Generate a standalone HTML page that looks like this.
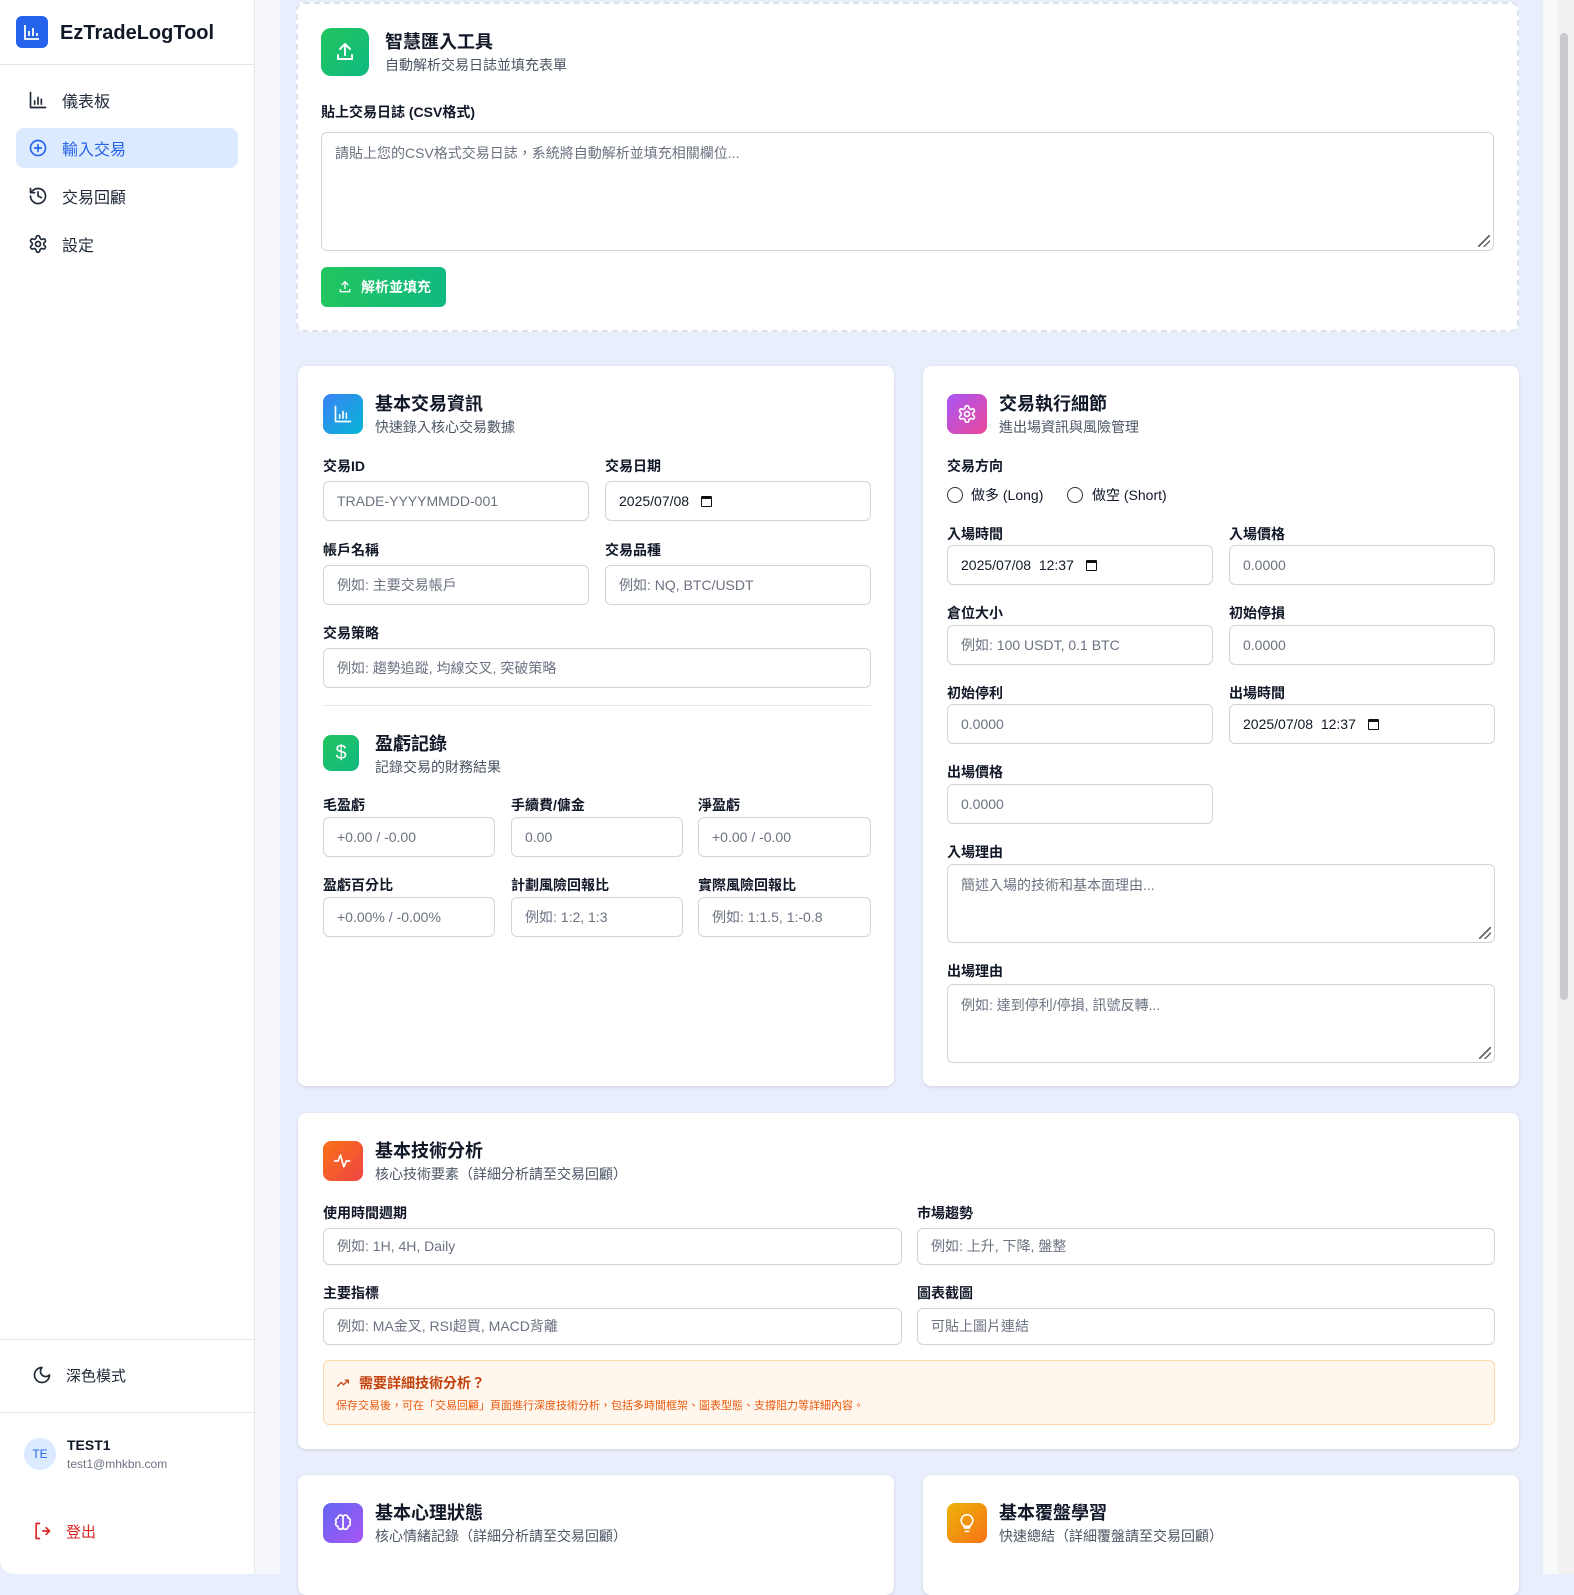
<!DOCTYPE html>
<html><head><meta charset="utf-8"><style>
*{box-sizing:border-box;margin:0;padding:0}
body{width:1574px;height:1574px;overflow:hidden;position:relative;font-family:"Liberation Sans","Noto Sans CJK TC",sans-serif;background:#e9eefc;color:#111827}
.a{position:absolute}
.sb{left:0;top:0;width:255px;height:1574px;background:#fff;border-right:1px solid #e5e7eb;border-bottom-left-radius:14px}
.hr{position:absolute;left:0;width:254px;height:1px;background:#e5e7eb}
.nav{position:absolute;left:16px;width:222px;height:40px;border-radius:8px;font-size:16px;color:#1f2937;display:flex;align-items:center;padding-left:12px;gap:14px}
.nav svg{width:20px;height:20px;fill:none;stroke:currentColor;stroke-width:2;stroke-linecap:round;stroke-linejoin:round}
.card{position:absolute;background:#fff;border-radius:8px;box-shadow:0 1px 3px rgba(0,0,0,.12)}
.ic{position:absolute;border-radius:8px;display:flex;align-items:center;justify-content:center}
.ic svg{fill:none;stroke:#fff;stroke-width:2;stroke-linecap:round;stroke-linejoin:round}
.t{position:absolute;font-size:18px;font-weight:700;color:#111827;line-height:22px}
.s{position:absolute;font-size:14px;color:#4b5563;line-height:18px}
.l{position:absolute;font-size:14px;font-weight:600;color:#111827;line-height:20px}
.in{position:absolute;height:40px;border:1px solid #d1d5db;border-radius:6px;background:#fff;font-size:14px;color:#6b7280;padding-left:13px;line-height:38px}
.dt{color:#111827}
.ta{position:absolute;border:1px solid #d1d5db;border-radius:6px;background:#fff;font-size:14px;color:#6b7280;padding:10px 13px}
.rz{position:absolute;right:3px;bottom:3px;width:12px;height:12px;background:linear-gradient(135deg,transparent 45%,#666 45%,#666 55%,transparent 55%,transparent 70%,#666 70%,#666 78%,transparent 78%)}
.cal{display:inline-block;width:11px;height:11px;border:1.5px solid #111;border-top-width:3px;border-radius:1px;vertical-align:-1px;margin-left:12px}
</style></head><body>
<div class="a" style="left:255px;top:0;width:25px;height:1574px;background:#f5f7fb"></div>
<div class="a" style="left:1543px;top:0;width:15px;height:1574px;background:#f8f9fb"></div>
<div class="a" style="left:1558px;top:0;width:16px;height:1574px;background:#f1f1f1"></div>
<div class="a" style="left:1560px;top:33px;width:8px;height:967px;background:#c9cbd1;border-radius:4px"></div>

<div class="a sb"></div>
<div class="a" style="left:16px;top:16px;width:32px;height:32px;border-radius:6px;background:#2563eb"><svg width="32" height="32" viewBox="0 0 32 32" fill="none" stroke="#fff" stroke-width="1.8"><path d="M9 9v14h14M13 20v-5M17 20v-8M21 20v-3"/></svg></div>
<div class="a" style="left:60px;top:20px;font-size:20px;font-weight:700;line-height:26px">EzTradeLogTool</div>
<div class="hr" style="top:64px"></div>
<div class="nav" style="top:80px"><svg viewBox="0 0 24 24"><path d="M3 3v18h18M8 17v-4M12 17V9M16 17v-6"/></svg>儀表板</div>
<div class="nav" style="top:128px;background:#dbeafe;color:#2563eb"><svg viewBox="0 0 24 24"><circle cx="12" cy="12" r="9"/><path d="M12 8v8M8 12h8"/></svg>輸入交易</div>
<div class="nav" style="top:176px"><svg viewBox="0 0 24 24"><path d="M3 12a9 9 0 1 0 3-6.7L3 8M3 3v5h5M12 7v5l4 2"/></svg>交易回顧</div>
<div class="nav" style="top:224px"><svg viewBox="0 0 24 24"><circle cx="12" cy="12" r="3"/><path d="M12.2 2h-.4a2 2 0 0 0-2 2v.2a2 2 0 0 1-1 1.7l-.4.3a2 2 0 0 1-2 0l-.2-.1a2 2 0 0 0-2.7.7l-.2.4a2 2 0 0 0 .7 2.7l.2.1a2 2 0 0 1 1 1.7v.5a2 2 0 0 1-1 1.7l-.2.1a2 2 0 0 0-.7 2.7l.2.4a2 2 0 0 0 2.7.7l.2-.1a2 2 0 0 1 2 0l.4.3a2 2 0 0 1 1 1.7v.2a2 2 0 0 0 2 2h.4a2 2 0 0 0 2-2v-.2a2 2 0 0 1 1-1.7l.4-.3a2 2 0 0 1 2 0l.2.1a2 2 0 0 0 2.7-.7l.2-.4a2 2 0 0 0-.7-2.7l-.2-.1a2 2 0 0 1-1-1.7v-.5a2 2 0 0 1 1-1.7l.2-.1a2 2 0 0 0 .7-2.7l-.2-.4a2 2 0 0 0-2.7-.7l-.2.1a2 2 0 0 1-2 0l-.4-.3a2 2 0 0 1-1-1.7V4a2 2 0 0 0-2-2z"/></svg>設定</div>
<div class="hr" style="top:1339px"></div>
<div class="nav" style="top:1355px;left:20px;font-size:15px"><svg viewBox="0 0 24 24"><path d="M12 3a6 6 0 0 0 9 9 9 9 0 1 1-9-9z"/></svg>深色模式</div>
<div class="hr" style="top:1412px"></div>
<div class="a" style="left:24px;top:1438px;width:32px;height:32px;border-radius:50%;background:#dbeafe;color:#2563eb;font-size:12px;text-align:center;line-height:32px">TE</div>
<div class="a" style="left:67px;top:1437px;font-size:14px;font-weight:700">TEST1</div>
<div class="a" style="left:67px;top:1457px;font-size:12px;color:#6b7280">test1@mhkbn.com</div>
<div class="nav" style="top:1511px;left:20px;font-size:15px;color:#dc2626"><svg viewBox="0 0 24 24"><path d="M9 3H5v18h4M13 12h8M17 8l4 4-4 4"/></svg>登出</div>

<!-- import card -->
<div class="card" style="left:296px;top:2px;width:1223px;height:330px;border:2px dashed #dde3ee;box-shadow:none"></div>
<div class="ic" style="left:321px;top:28px;width:48px;height:48px;border-radius:10px;background:linear-gradient(135deg,#22c55e,#10b981)"><svg width="24" height="24" viewBox="0 0 24 24"><path d="M12 15V4M7 9l5-5 5 5M5 15v4h14v-4"/></svg></div>
<div class="t" style="left:385px;top:31px">智慧匯入工具</div>
<div class="s" style="left:385px;top:56px">自動解析交易日誌並填充表單</div>
<div class="l" style="left:321px;top:102px">貼上交易日誌 (CSV格式)</div>
<div class="ta" style="left:321px;top:132px;width:1173px;height:119px">請貼上您的CSV格式交易日誌，系統將自動解析並填充相關欄位...<div class="rz"></div></div>
<div class="a" style="left:321px;top:267px;width:125px;height:40px;border-radius:6px;background:linear-gradient(90deg,#22c55e,#10b981);color:#fff;font-size:14px;font-weight:700;display:flex;align-items:center;padding-left:16px;gap:8px"><svg width="16" height="16" viewBox="0 0 24 24" fill="none" stroke="#fff" stroke-width="2"><path d="M12 15V4M7 9l5-5 5 5M5 15v4h14v-4"/></svg>解析並填充</div>

<!-- left card -->
<div class="card" style="left:298px;top:366px;width:596px;height:720px"></div>
<div class="ic" style="left:323px;top:394px;width:40px;height:40px;background:linear-gradient(135deg,#3b82f6,#06b6d4)"><svg width="20" height="20" viewBox="0 0 24 24"><path d="M3 3v18h18M8 17v-4M12 17V9M16 17v-6"/></svg></div>
<div class="t" style="left:375px;top:393px">基本交易資訊</div>
<div class="s" style="left:375px;top:418px">快速錄入核心交易數據</div>
<div class="l" style="left:323px;top:456px">交易ID</div>
<div class="in" style="left:323px;top:481px;width:266px">TRADE-YYYYMMDD-001</div>
<div class="l" style="left:605px;top:456px">交易日期</div>
<div class="in dt" style="left:605px;top:481px;width:266px">2025/07/08<span class="cal"></span></div>
<div class="l" style="left:323px;top:540px">帳戶名稱</div>
<div class="in" style="left:323px;top:565px;width:266px">例如: 主要交易帳戶</div>
<div class="l" style="left:605px;top:540px">交易品種</div>
<div class="in" style="left:605px;top:565px;width:266px">例如: NQ, BTC/USDT</div>
<div class="l" style="left:323px;top:623px">交易策略</div>
<div class="in" style="left:323px;top:648px;width:548px">例如: 趨勢追蹤, 均線交叉, 突破策略</div>
<div class="a" style="left:323px;top:705px;width:548px;height:1px;background:#e5e7eb"></div>
<div class="ic" style="left:323px;top:735px;width:36px;height:36px;background:linear-gradient(135deg,#22c55e,#10b981)"><span style="color:#fff;font-size:20px">$</span></div>
<div class="t" style="left:375px;top:733px">盈虧記錄</div>
<div class="s" style="left:375px;top:758px">記錄交易的財務結果</div>
<div class="l" style="left:323px;top:795px">毛盈虧</div>
<div class="in" style="left:323px;top:817px;width:172px">+0.00 / -0.00</div>
<div class="l" style="left:511px;top:795px">手續費/傭金</div>
<div class="in" style="left:511px;top:817px;width:172px">0.00</div>
<div class="l" style="left:698px;top:795px">淨盈虧</div>
<div class="in" style="left:698px;top:817px;width:173px">+0.00 / -0.00</div>
<div class="l" style="left:323px;top:875px">盈虧百分比</div>
<div class="in" style="left:323px;top:897px;width:172px">+0.00% / -0.00%</div>
<div class="l" style="left:511px;top:875px">計劃風險回報比</div>
<div class="in" style="left:511px;top:897px;width:172px">例如: 1:2, 1:3</div>
<div class="l" style="left:698px;top:875px">實際風險回報比</div>
<div class="in" style="left:698px;top:897px;width:173px">例如: 1:1.5, 1:-0.8</div>

<!-- right card -->
<div class="card" style="left:923px;top:366px;width:596px;height:720px"></div>
<div class="ic" style="left:947px;top:394px;width:40px;height:40px;background:linear-gradient(135deg,#a855f7,#ec4899)"><svg width="20" height="20" viewBox="0 0 24 24"><circle cx="12" cy="12" r="3"/><path d="M12.2 2h-.4a2 2 0 0 0-2 2v.2a2 2 0 0 1-1 1.7l-.4.3a2 2 0 0 1-2 0l-.2-.1a2 2 0 0 0-2.7.7l-.2.4a2 2 0 0 0 .7 2.7l.2.1a2 2 0 0 1 1 1.7v.5a2 2 0 0 1-1 1.7l-.2.1a2 2 0 0 0-.7 2.7l.2.4a2 2 0 0 0 2.7.7l.2-.1a2 2 0 0 1 2 0l.4.3a2 2 0 0 1 1 1.7v.2a2 2 0 0 0 2 2h.4a2 2 0 0 0 2-2v-.2a2 2 0 0 1 1-1.7l.4-.3a2 2 0 0 1 2 0l.2.1a2 2 0 0 0 2.7-.7l.2-.4a2 2 0 0 0-.7-2.7l-.2-.1a2 2 0 0 1-1-1.7v-.5a2 2 0 0 1 1-1.7l.2-.1a2 2 0 0 0 .7-2.7l-.2-.4a2 2 0 0 0-2.7-.7l-.2.1a2 2 0 0 1-2 0l-.4-.3a2 2 0 0 1-1-1.7V4a2 2 0 0 0-2-2z"/></svg></div>
<div class="t" style="left:999px;top:393px">交易執行細節</div>
<div class="s" style="left:999px;top:418px">進出場資訊與風險管理</div>
<div class="l" style="left:947px;top:456px">交易方向</div>
<div class="a" style="left:947px;top:487px;width:16px;height:16px;border:1.5px solid #333;border-radius:50%"></div>
<div class="a" style="left:971px;top:485px;font-size:14px">做多 (Long)</div>
<div class="a" style="left:1067px;top:487px;width:16px;height:16px;border:1.5px solid #333;border-radius:50%"></div>
<div class="a" style="left:1092px;top:485px;font-size:14px">做空 (Short)</div>
<div class="l" style="left:947px;top:524px">入場時間</div>
<div class="in dt" style="left:947px;top:545px;width:266px">2025/07/08&nbsp; 12:37<span class="cal"></span></div>
<div class="l" style="left:1229px;top:524px">入場價格</div>
<div class="in" style="left:1229px;top:545px;width:266px">0.0000</div>
<div class="l" style="left:947px;top:603px">倉位大小</div>
<div class="in" style="left:947px;top:625px;width:266px">例如: 100 USDT, 0.1 BTC</div>
<div class="l" style="left:1229px;top:603px">初始停損</div>
<div class="in" style="left:1229px;top:625px;width:266px">0.0000</div>
<div class="l" style="left:947px;top:683px">初始停利</div>
<div class="in" style="left:947px;top:704px;width:266px">0.0000</div>
<div class="l" style="left:1229px;top:683px">出場時間</div>
<div class="in dt" style="left:1229px;top:704px;width:266px">2025/07/08&nbsp; 12:37<span class="cal"></span></div>
<div class="l" style="left:947px;top:762px">出場價格</div>
<div class="in" style="left:947px;top:784px;width:266px">0.0000</div>
<div class="l" style="left:947px;top:842px">入場理由</div>
<div class="ta" style="left:947px;top:864px;width:548px;height:79px">簡述入場的技術和基本面理由...<div class="rz"></div></div>
<div class="l" style="left:947px;top:961px">出場理由</div>
<div class="ta" style="left:947px;top:984px;width:548px;height:79px">例如: 達到停利/停損, 訊號反轉...<div class="rz"></div></div>

<!-- tech card -->
<div class="card" style="left:298px;top:1113px;width:1221px;height:336px"></div>
<div class="ic" style="left:323px;top:1141px;width:40px;height:40px;background:linear-gradient(135deg,#f97316,#ef4444)"><svg width="20" height="20" viewBox="0 0 24 24"><path d="M2 12h4l3-7 4 14 3-7h4"/></svg></div>
<div class="t" style="left:375px;top:1140px">基本技術分析</div>
<div class="s" style="left:375px;top:1165px">核心技術要素（詳細分析請至交易回顧）</div>
<div class="l" style="left:323px;top:1203px">使用時間週期</div>
<div class="in" style="left:323px;top:1228px;width:579px;height:37px;line-height:35px">例如: 1H, 4H, Daily</div>
<div class="l" style="left:917px;top:1203px">市場趨勢</div>
<div class="in" style="left:917px;top:1228px;width:578px;height:37px;line-height:35px">例如: 上升, 下降, 盤整</div>
<div class="l" style="left:323px;top:1283px">主要指標</div>
<div class="in" style="left:323px;top:1308px;width:579px;height:37px;line-height:35px">例如: MA金叉, RSI超買, MACD背離</div>
<div class="l" style="left:917px;top:1283px">圖表截圖</div>
<div class="in" style="left:917px;top:1308px;width:578px;height:37px;line-height:35px">可貼上圖片連結</div>
<div class="a" style="left:323px;top:1360px;width:1172px;height:65px;background:#fff7ed;border:1px solid #fed7aa;border-radius:6px"></div>
<svg class="a" style="left:335px;top:1376px" width="16" height="14" viewBox="0 0 24 24" fill="none" stroke="#c2410c" stroke-width="2.2"><path d="M2 18l7-7 4 4 8-8M15 7h6v6"/></svg>
<div class="a" style="left:359px;top:1373px;font-size:14px;color:#c2410c;font-weight:600">需要詳細技術分析？</div>
<div class="a" style="left:336px;top:1397px;font-size:11px;color:#ea580c">保存交易後，可在「交易回顧」頁面進行深度技術分析，包括多時間框架、圖表型態、支撐阻力等詳細內容。</div>

<!-- bottom cards -->
<div class="card" style="left:298px;top:1475px;width:596px;height:120px"></div>
<div class="ic" style="left:323px;top:1503px;width:40px;height:40px;background:linear-gradient(135deg,#6366f1,#a855f7)"><svg width="20" height="20" viewBox="0 0 24 24"><path d="M12 5a3 3 0 0 0-6 1 3 3 0 0 0-2 5 3 3 0 0 0 2 5 3 3 0 0 0 6 1zM12 5a3 3 0 0 1 6 1 3 3 0 0 1 2 5 3 3 0 0 1-2 5 3 3 0 0 1-6 1zM12 5v14"/></svg></div>
<div class="t" style="left:375px;top:1502px">基本心理狀態</div>
<div class="s" style="left:375px;top:1527px">核心情緒記錄（詳細分析請至交易回顧）</div>
<div class="card" style="left:923px;top:1475px;width:596px;height:120px"></div>
<div class="ic" style="left:947px;top:1503px;width:40px;height:40px;background:linear-gradient(135deg,#eab308,#f97316)"><svg width="20" height="20" viewBox="0 0 24 24"><path d="M9 18h6M10 22h4M12 2a7 7 0 0 0-4 12.7V16h8v-1.3A7 7 0 0 0 12 2z"/></svg></div>
<div class="t" style="left:999px;top:1502px">基本覆盤學習</div>
<div class="s" style="left:999px;top:1527px">快速總結（詳細覆盤請至交易回顧）</div>
</body></html>
